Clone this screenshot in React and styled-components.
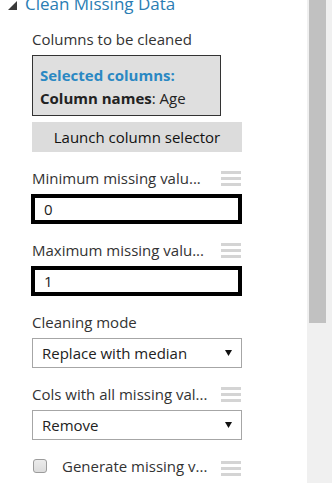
import React from "react";
import styled, { createGlobalStyle } from "styled-components";

const Global = createGlobalStyle`
  html, body { margin: 0; padding: 0; background: #fff; overflow: hidden; }
  body { font-family: "Open Sans", "Noto Sans", sans-serif; color: #333; }
  * { box-sizing: border-box; }
`;

const Frame = styled.div`
  display: flex;
  width: 332px;
  height: 483px;
  overflow: hidden;
`;

const Panel = styled.div`
  flex: 1;
  display: flex;
  flex-direction: column;
  padding-left: 32px;
  background: #fff;
`;

const TitleRow = styled.div`
  display: flex;
  align-items: center;
  gap: 8px;
  height: 20px;
  margin: -6px 0 0 -24px;
`;

const TitleText = styled.span`
  font-size: 17px;
  line-height: 20px;
  color: #2a7db3;
  white-space: nowrap;
`;

const Label = styled.div`
  font-size: 15px;
  line-height: 20px;
  height: 20px;
  color: #333;
  white-space: nowrap;
  margin-top: 15px;
`;

const SelectedBox = styled.div`
  width: 189px;
  height: 61px;
  margin-top: 6px;
  border: 1px solid #333;
  background: #dfdfdf;
  padding: 8px 7px 4px;
  font-size: 15px;
  line-height: 23px;
  white-space: nowrap;
`;

const Line = styled.div`
  color: ${(p) => (p.$accent ? "#2a88c3" : "#222")};
  font-weight: ${(p) => (p.$accent ? 700 : 400)};
`;

const Strong = styled.b`
  font-weight: 700;
`;

const LaunchButton = styled.button`
  width: 210px;
  height: 30px;
  margin-top: 6px;
  border: none;
  background: #dcdcdc;
  color: #111;
  font-family: inherit;
  font-size: 15px;
  padding: 0;
`;

const FieldHead = styled.div`
  width: 210px;
  height: 20px;
  margin-top: 16px;
  display: flex;
  align-items: center;
  justify-content: space-between;
  font-size: 15px;
  line-height: 20px;
  color: #333;
  white-space: nowrap;
`;

const Grip = styled.div`
  width: 20px;
  display: flex;
  flex-direction: column;
  gap: 3px;
  margin-right: 1px;
  margin-top: ${(p) => p.$shift || 0}px;
  & > i { display: block; height: 3px; background: #d4d4d4; }
`;

const TextInput = styled.div`
  width: 211px;
  height: 30px;
  margin: 6px 0 0 -1px;
  border: 4px solid #000;
  padding-left: 9px;
  display: flex;
  align-items: center;
  font-size: 15px;
  color: #222;
`;

const SelectBox = styled.div`
  width: 210px;
  height: 30px;
  margin-top: 6px;
  border: 1px solid #a6a6a6;
  padding: 0 9px 0 9px;
  display: flex;
  align-items: center;
  justify-content: space-between;
  font-size: 15px;
  color: #222;
  background: #fff;
`;

const CheckRow = styled.div`
  width: 210px;
  height: 20px;
  margin-top: 16px;
  display: flex;
  align-items: center;
  font-size: 15px;
  line-height: 20px;
  color: #333;
  white-space: nowrap;
`;

const CheckBox = styled.span`
  width: 14px;
  height: 14px;
  margin-left: 1px;
  border: 1px solid #9c9c9c;
  border-radius: 3px;
  background: linear-gradient(#ececec, #dcdcdc);
  flex: none;
`;

const CheckText = styled.span`
  margin-left: 15px;
  flex: 1;
`;

const ScrollTrack = styled.div`
  width: 25px;
  background: #f0f0f0;
  padding-left: 2px;
`;

const ScrollThumb = styled.div`
  width: 17px;
  height: 323px;
  background: #c1c1c1;
`;

const Hamburger = ({ shift }) => (
  <Grip $shift={shift}>
    <i />
    <i />
    <i />
  </Grip>
);

const Arrow = () => (
  <svg width="7" height="6" viewBox="0 0 7 6">
    <polygon points="0,0 7,0 3.5,6" fill="#111" />
  </svg>
);

export default function App() {
  return (
    <>
      <Global />
      <Frame>
        <Panel>
          <TitleRow>
            <svg width="9" height="9" viewBox="0 0 9 9" style={{ marginTop: 2 }}>
              <polygon points="9,0 9,9 0,9" fill="#3a3a3a" />
            </svg>
            <TitleText>Clean Missing Data</TitleText>
          </TitleRow>

          <Label>Columns to be cleaned</Label>
          <SelectedBox>
            <Line $accent>Selected columns:</Line>
            <Line>
              <Strong>Column names</Strong>: Age
            </Line>
          </SelectedBox>
          <LaunchButton>Launch column selector</LaunchButton>

          <FieldHead>
            <span>Minimum missing valu...</span>
            <Hamburger />
          </FieldHead>
          <TextInput>0</TextInput>

          <FieldHead>
            <span>Maximum missing valu...</span>
            <Hamburger />
          </FieldHead>
          <TextInput>1</TextInput>

          <FieldHead>
            <span>Cleaning mode</span>
          </FieldHead>
          <SelectBox>
            <span>Replace with median</span>
            <Arrow />
          </SelectBox>

          <FieldHead>
            <span>Cols with all missing val...</span>
            <Hamburger />
          </FieldHead>
          <SelectBox>
            <span>Remove</span>
            <Arrow />
          </SelectBox>

          <CheckRow>
            <CheckBox />
            <CheckText>Generate missing v...</CheckText>
            <Hamburger shift={4} />
          </CheckRow>
        </Panel>
        <ScrollTrack>
          <ScrollThumb />
        </ScrollTrack>
      </Frame>
    </>
  );
}
